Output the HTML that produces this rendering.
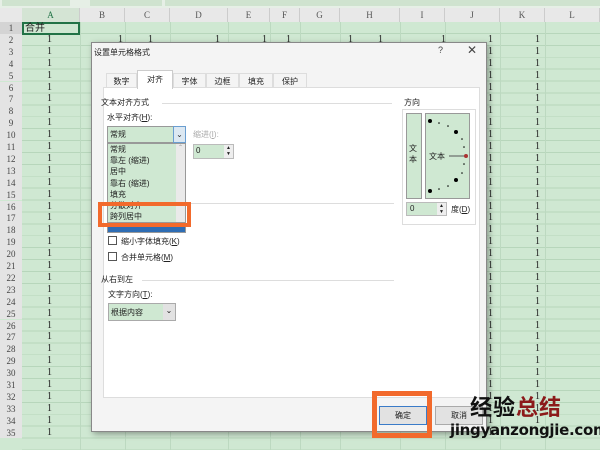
<!DOCTYPE html>
<html><head><meta charset="utf-8"><style>
*{margin:0;padding:0;box-sizing:border-box}
body{width:600px;height:450px;overflow:hidden;position:relative;background:#cfe8d2;font-family:"Liberation Sans","Noto Sans CJK SC",sans-serif;font-size:9px;color:#222}
.a{position:absolute}
.grid{left:22px;top:22px;width:578px;height:428px;background-image:repeating-linear-gradient(to bottom,transparent 0 11px,#b7d6bb 11px 11.9px)}
.vl{top:8px;width:1px;height:442px;background:#bcd9c0}
.rn{left:0;width:22px;text-align:center;font-family:"Liberation Serif",serif;font-size:9px;color:#444;background:#e4e4e4}
.one{font-family:"Liberation Serif",serif;font-size:10px}
.ch{top:8px;height:14px;background:#e8e8e8;font-family:"Liberation Serif",serif;font-size:9px;color:#555;text-align:center;line-height:14px;border-right:1px solid #ccc}
.dlg{left:91px;top:42px;width:396px;height:390px;background:#f4f4f4;border:1px solid #888;box-shadow:2px 2px 6px rgba(0,0,0,.35)}
.t{font-size:8px;color:#222}
.gb{border-top:1px solid #ddd}
.cb{width:9px;height:9px;border:1px solid #555;background:#fff}
</style></head><body>
<div class="a" style="left:0;top:0;width:600px;height:8px;background:#e6efe6"></div>
<div class="a" style="left:2px;top:0;width:68px;height:6px;background:#cfe3cf"></div>
<div class="a" style="left:90px;top:0;width:72px;height:6px;background:#cfe3cf"></div>
<div class="a" style="left:165px;top:0;width:435px;height:6px;background:#cfe3cf"></div>
<div class="a grid"></div>
<div class="a" style="left:0;top:8px;width:22px;height:14px;background:#e8e8e8"></div>
<div id="g"></div>
<div class="a" style="left:22px;top:22px;width:58px;height:13px;border:2px solid #217346;background:#cfe8d2;font-size:10px;padding-left:1px;line-height:9px">合并</div>

<div class="a dlg">
 <div class="a t" style="left:2px;top:4px;font-size:8px">设置单元格格式</div>
 <div class="a" style="left:346px;top:2px;font-size:9px;color:#444">?</div>
 <div class="a" style="left:375px;top:0px;font-size:12px;color:#444">✕</div>
 <div class="a" style="left:11px;top:44px;width:377px;height:311px;background:#fff;border:1px solid #ddd"></div>
 <div class="a t" style="left:14px;top:30px;width:31px;height:15px;text-align:center;line-height:15px;border:1px solid #ddd;border-bottom:none">数字</div>
 <div class="a t" style="left:45px;top:27px;width:36px;height:19px;text-align:center;line-height:17px;background:#fff;border:1px solid #ccc;border-bottom:none">对齐</div>
 <div class="a t" style="left:81px;top:30px;width:33px;height:15px;text-align:center;line-height:15px;border:1px solid #ddd;border-bottom:none">字体</div>
 <div class="a t" style="left:114px;top:30px;width:33px;height:15px;text-align:center;line-height:15px;border:1px solid #ddd;border-bottom:none">边框</div>
 <div class="a t" style="left:147px;top:30px;width:34px;height:15px;text-align:center;line-height:15px;border:1px solid #ddd;border-bottom:none">填充</div>
 <div class="a t" style="left:181px;top:30px;width:34px;height:15px;text-align:center;line-height:15px;border:1px solid #ddd;border-bottom:none">保护</div>

 <div class="a gb" style="left:70px;top:60px;width:230px"></div>
 <div class="a t" style="left:9px;top:54px">文本对齐方式</div>
 <div class="a t" style="left:15px;top:69px">水平对齐(<u>H</u>):</div>
 <div class="a" style="left:15px;top:83px;width:79px;height:17px;background:#cfe8d2;border:1px solid #999"></div>
 <div class="a t" style="left:18px;top:86px">常规</div>
 <div class="a" style="left:81px;top:83px;width:13px;height:17px;background:#dce8f2;border:1px solid #6a9ed0;font-size:8px;text-align:center;line-height:15px;color:#333">⌄</div>
 <div class="a t" style="left:101px;top:86px;color:#aaa">缩进(<u>I</u>):</div>
 <div class="a" style="left:101px;top:101px;width:41px;height:15px;background:#cfe8d2;border:1px solid #bbb"></div>
 <div class="a t" style="left:104px;top:103px">0</div>
 <div class="a" style="left:132px;top:102px;width:9px;height:13px;background:#eee;font-size:5px;line-height:6px;text-align:center">▲<br>▼</div>
 <div class="a gb" style="left:95px;top:160px;width:207px"></div>
 <div class="a" style="left:15px;top:178px;width:79px;height:12px;background:#2e6db4;border:1px solid #999"></div>
 <div class="a" style="left:15px;top:100px;width:79px;height:80px;background:#cfe8d2;border:1px solid #999"></div>
 <div class="a" style="left:84px;top:101px;width:9px;height:78px;background:#eaeaea;font-size:6px;color:#999;text-align:center">⌃</div>
 <div class="a t" style="left:18px;top:101px;line-height:11.2px">常规<br>靠左 (缩进)<br>居中<br>靠右 (缩进)<br>填充<br>分散对齐<br>跨列居中</div>
 <div class="a" style="left:6px;top:159px;width:93px;height:25px;border:4px solid #f26a2c"></div>
 <div class="a cb" style="left:16px;top:193px"></div>
 <div class="a t" style="left:29px;top:193px">缩小字体填充(<u>K</u>)</div>
 <div class="a cb" style="left:16px;top:209px"></div>
 <div class="a t" style="left:29px;top:209px">合并单元格(<u>M</u>)</div>
 <div class="a gb" style="left:50px;top:237px;width:252px"></div>
 <div class="a t" style="left:9px;top:231px">从右到左</div>
 <div class="a t" style="left:16px;top:246px">文字方向(<u>T</u>):</div>
 <div class="a" style="left:16px;top:260px;width:68px;height:18px;background:#cfe8d2;border:1px solid #aaa"></div>
 <div class="a t" style="left:19px;top:264px">根据内容</div>
 <div class="a" style="left:71px;top:261px;width:12px;height:16px;background:#e2e2e2;font-size:8px;text-align:center;line-height:14px">⌄</div>

 <div class="a t" style="left:312px;top:54px">方向</div>
 <div class="a" style="left:310px;top:66px;width:74px;height:116px;border:1px solid #ddd"></div>
 <div class="a" style="left:314px;top:70px;width:16px;height:86px;background:#cfe8d2;border:1px solid #999"></div>
 <div class="a t" style="left:317px;top:100px;line-height:11px">文<br>本</div>
 <div class="a" style="left:333px;top:70px;width:45px;height:86px;background:#cfe8d2;border:1px solid #999"></div>
 <svg class="a" style="left:333px;top:70px" width="45" height="86"><g fill="#000"><circle cx="5" cy="8" r="2"/><circle cx="14" cy="10" r=".8"/><circle cx="23" cy="13" r=".8"/><circle cx="31" cy="19" r="2"/><circle cx="37" cy="26" r=".8"/><circle cx="39" cy="34" r=".8"/><circle cx="39" cy="51" r=".8"/><circle cx="37" cy="60" r=".8"/><circle cx="31" cy="67" r="2"/><circle cx="23" cy="73" r=".8"/><circle cx="14" cy="76" r=".8"/><circle cx="5" cy="78" r="2"/></g><line x1="24" y1="43" x2="40" y2="43" stroke="#555"/><circle cx="41" cy="43" r="2" fill="#a33"/></svg>
 <div class="a t" style="left:337px;top:108px">文本</div>
 <div class="a" style="left:314px;top:159px;width:41px;height:14px;background:#cfe8d2;border:1px solid #bbb"></div>
 <div class="a t" style="left:318px;top:161px">0</div>
 <div class="a" style="left:345px;top:160px;width:9px;height:12px;background:#eee;font-size:5px;line-height:6px;text-align:center">▲<br>▼</div>
 <div class="a t" style="left:359px;top:161px">度(<u>D</u>)</div>

 <div class="a" style="left:287px;top:363px;width:48px;height:19px;background:#e2e2e2;border:1px solid #3a7bc8;font-size:8px;text-align:center;line-height:17px">确定</div>
 <div class="a" style="left:343px;top:363px;width:48px;height:19px;background:#e2e2e2;border:1px solid #aaa;font-size:8px;text-align:center;line-height:17px">取消</div>
</div>
<div class="a" style="left:372px;top:391px;width:60px;height:47px;border:5px solid #f26a2c"></div>
<div class="a" style="left:470px;top:394px;font-size:22px;font-weight:bold;font-family:'Noto Sans CJK SC',sans-serif;letter-spacing:1px;line-height:24px"><span style="color:#111">经验</span><span style="color:#8c1a1a">总结</span></div>
<div class="a" style="left:450px;top:421px;font-size:15px;font-weight:bold;color:#111;font-family:'DejaVu Sans',sans-serif;letter-spacing:-.3px">jingyanzongjie.com</div>
<script>
var g=document.getElementById('g'),h='';
var cols=[['A',22,80],['B',80,125],['C',125,170],['D',170,228],['E',228,270],['F',270,300],['G',300,340],['H',340,400],['I',400,445],['J',445,500],['K',500,545],['L',545,600]];
cols.forEach(function(c){h+='<div class="a ch" style="left:'+c[1]+'px;width:'+(c[2]-c[1])+'px;'+(c[0]=='A'?'background:#d4e4d4;color:#217346':'')+'">'+c[0]+'</div><div class="a vl" style="left:'+c[2]+'px"></div>';});
for(var r=1;r<=35;r++){var y=22+(r-1)*11.9;h+='<div class="a rn" style="top:'+y+'px;height:11.9px;line-height:12px;'+(r==1?'background:#d4d4d4':'')+'">'+r+'</div>';
if(r>1){h+='<div class="a one" style="left:47px;top:'+y+'px">1</div><div class="a one" style="left:488px;top:'+y+'px">1</div><div class="a one" style="left:535px;top:'+y+'px">1</div>';}}
[118,148,215,262,286,348,378,441].forEach(function(x){h+='<div class="a one" style="left:'+x+'px;top:33.9px">1</div>';});
g.innerHTML=h;
</script>
</body></html>
